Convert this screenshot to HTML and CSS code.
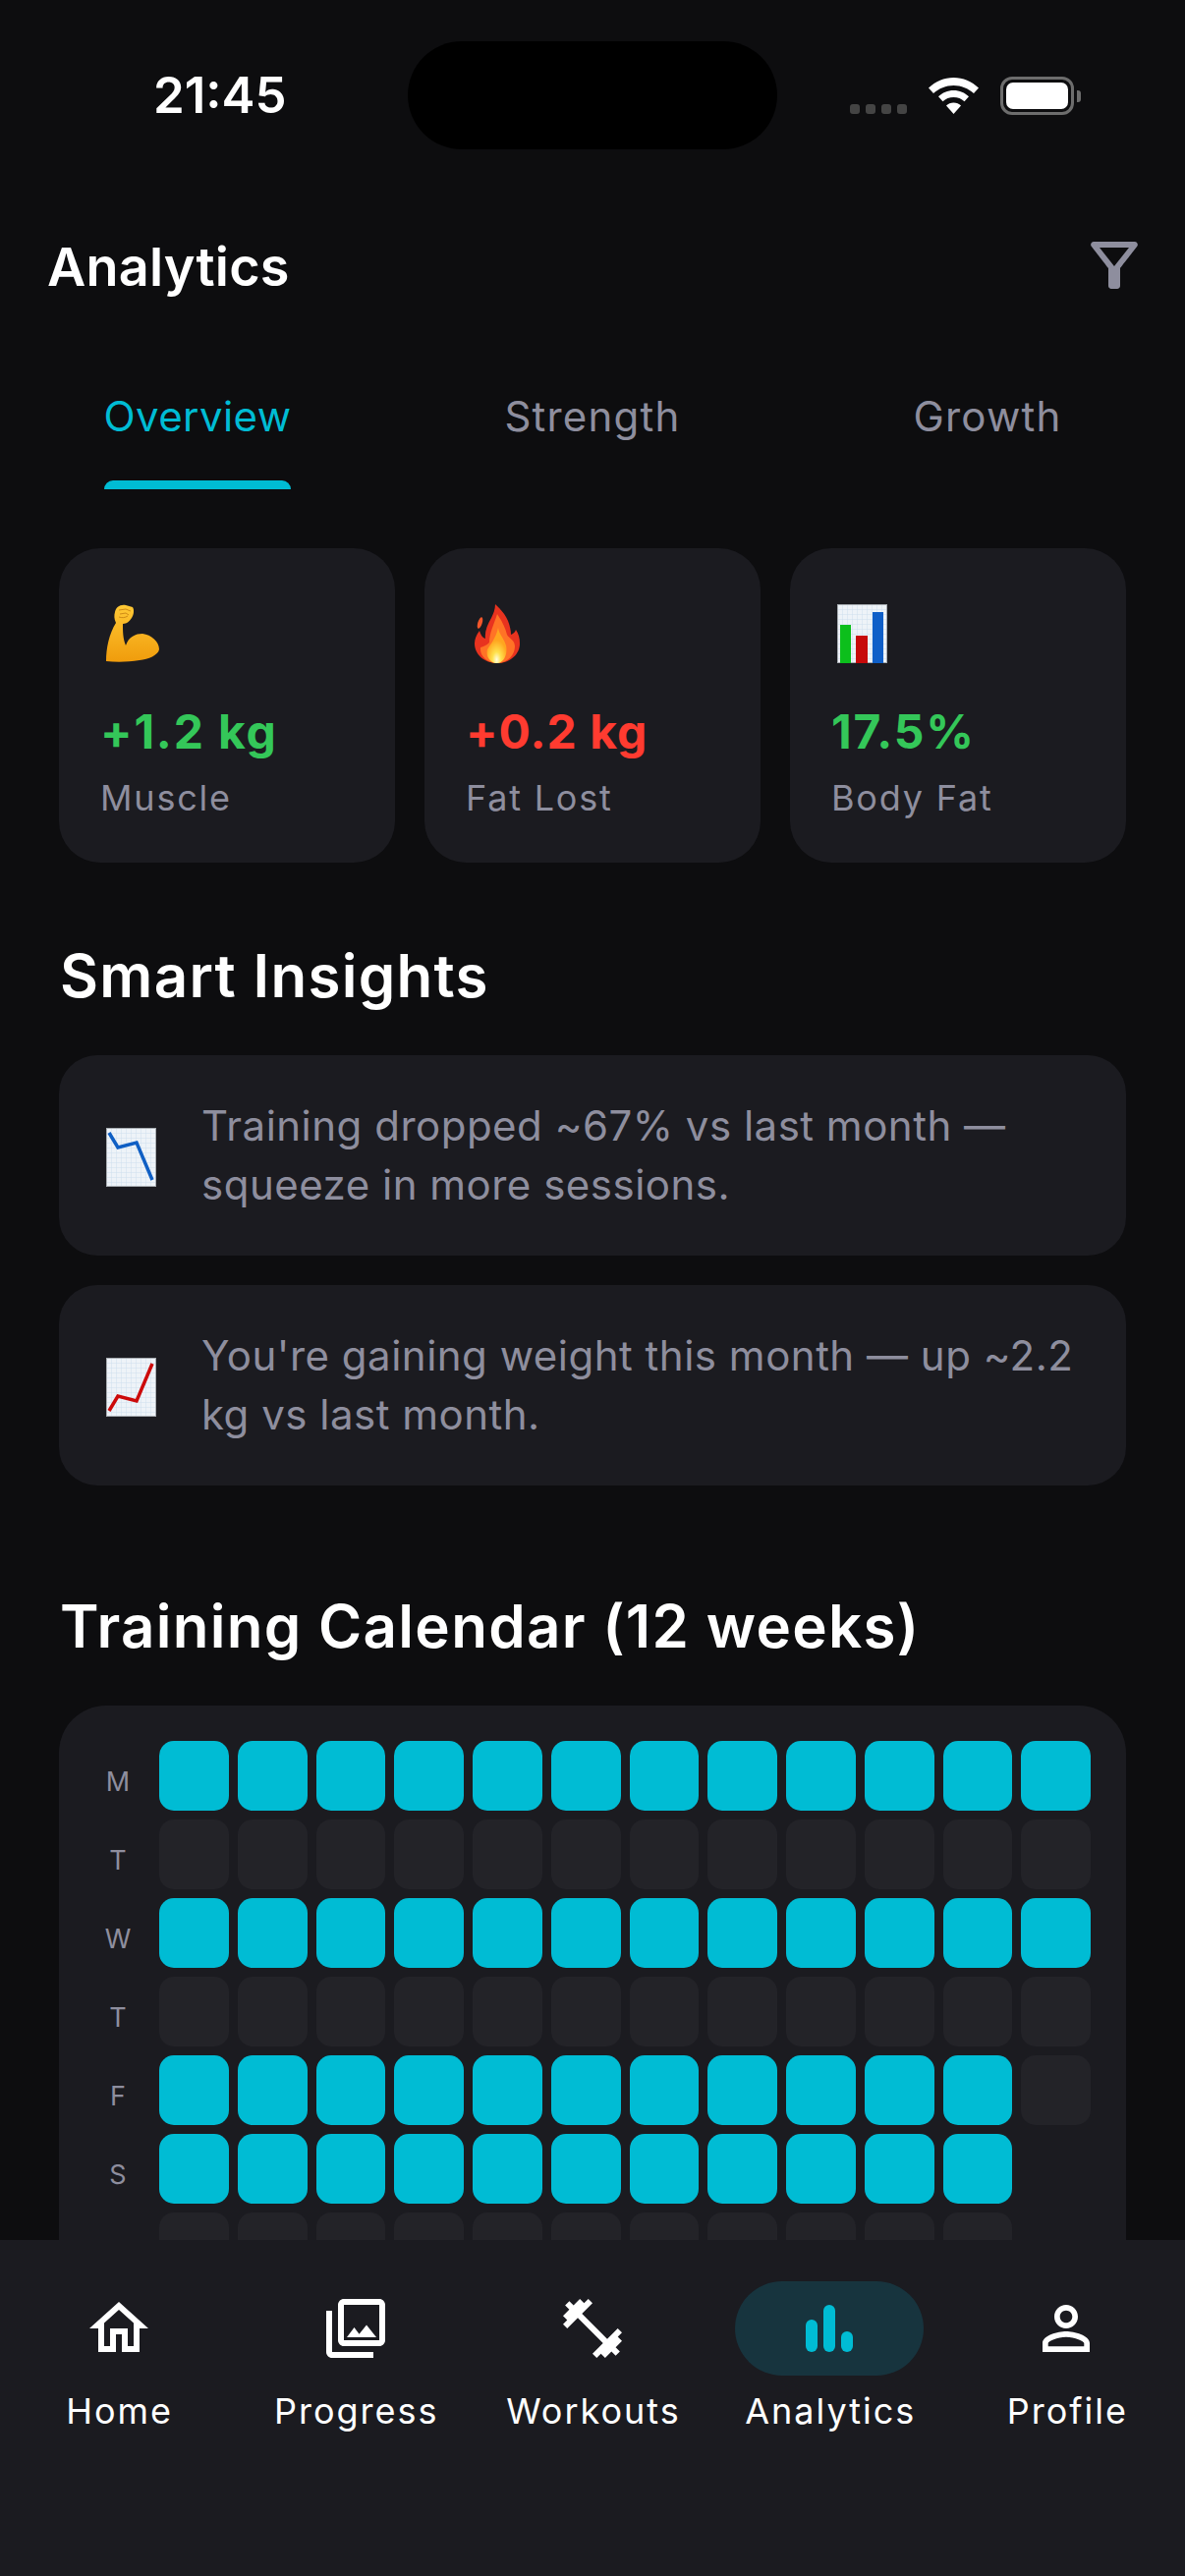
FILE: index.html
```html
<!DOCTYPE html>
<html lang="en">
<head>
<meta charset="utf-8">
<title>Analytics</title>
<link rel="stylesheet" href="styles.css">
</head>
<body>
<div class="app">
  <div class="status">
    <span class="time">21:45</span>
    <div class="island"></div>
    <div class="status-icons">
      <div class="dots"><i></i><i></i><i></i><i></i></div>
      <svg class="wifi" viewBox="0 0 51 37"><path fill="#fff" d="M25.5 0C35 0 44 4 51 10.5L46 16C40.5 11 33.300 8 25.500 8S10.500 11 5 16L0 10.500C7 4 16 0 25.500 0Z"/><path fill="#fff" d="M25.500 13C31.500 13 37 15.300 41 19.300L36.500 24.300C33.500 21.500 29.800 20 25.500 20S17.500 21.500 14.500 24.300L10 19.300C14 15.300 19.500 13 25.500 13Z"/><path fill="#fff" d="M25.500 25.500C28.500 25.500 31 26.500 33 28.500L25.500 37 18 28.500C20 26.500 22.500 25.500 25.500 25.500Z"/></svg>
      <div class="battery"><div class="battery-fill"></div></div>
      <div class="battery-tip"></div>
    </div>
  </div>

  <header class="header">
    <h1 class="title">Analytics</h1>
    <svg class="filter" viewBox="0 0 24 24"><path fill="#8e8e9e" d="M7 6h10l-5.010 6.300L7 6zm-2.750-.39C6.270 8.200 10 13 10 13v6c0 .55.45 1 1 1h2c.55 0 1-.45 1-1v-6s3.720-4.800 5.740-7.390c.51-.66.04-1.610-.79-1.610H5.040c-.83 0-1.300.95-.79 1.610z"/></svg>
  </header>

  <nav class="tabs">
    <div class="tab tab-active">Overview<span class="tab-bar"></span></div>
    <div class="tab">Strength</div>
    <div class="tab">Growth</div>
  </nav>

  <section class="stats">
    <div class="stat">
      <svg class="emoji" viewBox="0 0 54 60"><defs><linearGradient id="arm" x1="0" y1="0" x2="0" y2="1"><stop offset="0" stop-color="#ffc935"/><stop offset="1" stop-color="#f09c0c"/></linearGradient></defs><path fill="url(#arm)" d="M9 8C10 3 14 0 20 1L27 3C29 6 28 11 26 14 24 17 21 20 17 20 17 27 17 35 20 42 23 33 30 30 37 30 46 31 54 38 54 46 53 52 43 56 34 57 22 59 10 59 0 58 0 45 3 30 10 19 8 15 8 11 9 8Z"/><path fill="none" stroke="#b9720c" stroke-width="1" opacity=".7" d="M13 6l7-1 5 2M14 10l6-1 3 2M13 13c3 1 6 1 9-1"/></svg>
      <div class="stat-value val-green">+1.2 kg</div>
      <div class="stat-label">Muscle</div>
    </div>
    <div class="stat">
      <svg class="emoji" viewBox="0 0 54 60"><defs><radialGradient id="core" cx=".5" cy=".9" r=".55"><stop offset="0" stop-color="#fffde0"/><stop offset=".4" stop-color="#ffe14d"/><stop offset="1" stop-color="#ffa51f"/></radialGradient></defs><g transform="translate(3 0)"><ellipse cx="5.500" cy="19" rx="2.200" ry="6" transform="rotate(18 5.500 19)" fill="#f4562a"/><path fill="#e8331f" d="M21 0C25 4 31 9 34 17 36 22 37 27 37 31 39 30 41 29 42 26 45 30 46 35 46 40 46 51 36 60 23 60 10 60 0 51 0 40 0 35 2 31 5 27 6 31 8 34 11 35 10 28 13 21 17 14 19 10 21 5 21 0Z"/><path fill="#ff7326" d="M23 10C27 16 31 23 33 31 35 35 41 36 41 43 41 52 33 60 23 60 12 60 5 52 6 44 9 43 12 42 15 39 15 29 20 20 23 10Z"/><path fill="url(#core)" d="M24 24C25 31 30 35 32 42 34 52 29 60 23 60 16 60 11 53 13 46 16 41 22 34 24 24Z"/></g></svg>
      <div class="stat-value val-red">+0.2 kg</div>
      <div class="stat-label">Fat Lost</div>
    </div>
    <div class="stat">
      <svg class="emoji" viewBox="0 0 54 60"><defs><pattern id="g0" width="5" height="5" patternUnits="userSpaceOnUse"><rect width="5" height="5" fill="#eef3f8"/><path d="M0 0H5M0 0V5" stroke="#cfe0ee" stroke-width="1"/></pattern></defs><rect x="0.500" y="0.500" width="50" height="59" fill="url(#g0)" stroke="#a8adb2"/><rect x="3" y="21" width="11" height="39" fill="#0cbf1c"/><rect x="19" y="32" width="12" height="28" fill="#c70a0a"/><rect x="36" y="8" width="11" height="52" fill="#0f5fc8"/></svg>
      <div class="stat-value val-green">17.5%</div>
      <div class="stat-label">Body Fat</div>
    </div>
  </section>

  <h2 class="section-title insights-title">Smart Insights</h2>
  <section class="insights">
    <div class="insight">
      <svg class="emoji-chart" viewBox="0 0 51 60"><defs><pattern id="g1" width="5" height="5" patternUnits="userSpaceOnUse"><rect width="5" height="5" fill="#eef3f8"/><path d="M0 0H5M0 0V5" stroke="#cfe0ee" stroke-width="1"/></pattern></defs><rect x="0.500" y="0.500" width="50" height="59" fill="url(#g1)" stroke="#a8adb2"/><path fill="none" stroke="#0f5fc4" stroke-width="3.500" d="M3 5l9 15 19-5 16 38"/></svg>
      <p class="insight-text">Training dropped ~67% vs last month — squeeze in more sessions.</p>
    </div>
    <div class="insight">
      <svg class="emoji-chart" viewBox="0 0 51 60"><rect x="0.500" y="0.500" width="50" height="59" fill="url(#g1)" stroke="#a8adb2"/><path fill="none" stroke="#cc0a0a" stroke-width="3.500" d="M3 54l9-15 19 5L47 6"/></svg>
      <p class="insight-text">You're gaining weight this month — up ~2.2 kg vs last month.</p>
    </div>
  </section>

  <h2 class="section-title calendar-title">Training Calendar (12 weeks)</h2>
  <section class="calendar">
    <div class="cal-row"><span class="day">M</span><div class="cells"><i class="on"></i><i class="on"></i><i class="on"></i><i class="on"></i><i class="on"></i><i class="on"></i><i class="on"></i><i class="on"></i><i class="on"></i><i class="on"></i><i class="on"></i><i class="on"></i></div></div>
    <div class="cal-row"><span class="day">T</span><div class="cells"><i></i><i></i><i></i><i></i><i></i><i></i><i></i><i></i><i></i><i></i><i></i><i></i></div></div>
    <div class="cal-row"><span class="day">W</span><div class="cells"><i class="on"></i><i class="on"></i><i class="on"></i><i class="on"></i><i class="on"></i><i class="on"></i><i class="on"></i><i class="on"></i><i class="on"></i><i class="on"></i><i class="on"></i><i class="on"></i></div></div>
    <div class="cal-row"><span class="day">T</span><div class="cells"><i></i><i></i><i></i><i></i><i></i><i></i><i></i><i></i><i></i><i></i><i></i><i></i></div></div>
    <div class="cal-row"><span class="day">F</span><div class="cells"><i class="on"></i><i class="on"></i><i class="on"></i><i class="on"></i><i class="on"></i><i class="on"></i><i class="on"></i><i class="on"></i><i class="on"></i><i class="on"></i><i class="on"></i><i></i></div></div>
    <div class="cal-row"><span class="day">S</span><div class="cells"><i class="on"></i><i class="on"></i><i class="on"></i><i class="on"></i><i class="on"></i><i class="on"></i><i class="on"></i><i class="on"></i><i class="on"></i><i class="on"></i><i class="on"></i></div></div>
    <div class="cal-row"><span class="day">S</span><div class="cells"><i></i><i></i><i></i><i></i><i></i><i></i><i></i><i></i><i></i><i></i><i></i></div></div>
  </section>

  <footer class="nav">
    <div class="nav-item">
      <div class="nav-icon"><svg viewBox="0 0 24 24"><path fill="#fff" d="M12 5.690l5 4.500V18h-2v-6H9v6H7v-7.810l5-4.500M12 3L2 12h3v8h6v-6h2v6h6v-8h3L12 3z"/></svg></div>
      <span class="nav-label">Home</span>
    </div>
    <div class="nav-item">
      <div class="nav-icon"><svg viewBox="0 0 24 24"><path fill="#fff" d="M20 4v12H8V4h12m0-2H8c-1.100 0-2 .9-2 2v12c0 1.100.9 2 2 2h12c1.100 0 2-.9 2-2V4c0-1.100-.9-2-2-2zm-8.500 9.670l1.690 2.260 2.480-3.100L19 15H9zM2 6v14c0 1.100.9 2 2 2h14v-2H4V6H2z"/></svg></div>
      <span class="nav-label">Progress</span>
    </div>
    <div class="nav-item">
      <div class="nav-icon"><svg viewBox="0 0 24 24"><path fill="#fff" d="M20.570 14.860L22 13.430 20.570 12 17 15.570 8.430 7 12 3.430 10.570 2 9.140 3.430 7.710 2 5.570 4.140 4.140 2.710 2.710 4.140l1.430 1.430L2 7.710l1.430 1.430L2 10.570 3.430 12 7 8.430 15.570 17 12 20.570 13.430 22l1.430-1.430L16.290 22l2.140-2.140 1.430 1.430 1.430-1.430-1.430-1.430L22 16.290z"/></svg></div>
      <span class="nav-label">Workouts</span>
    </div>
    <div class="nav-item">
      <div class="nav-icon nav-icon-active"><svg viewBox="0 0 24 24"><rect fill="#00bcd4" x="4" y="9" width="4" height="11" rx="2"/><rect fill="#00bcd4" x="10" y="4" width="4" height="16" rx="2"/><rect fill="#00bcd4" x="16" y="13" width="4" height="7" rx="2"/></svg></div>
      <span class="nav-label">Analytics</span>
    </div>
    <div class="nav-item">
      <div class="nav-icon"><svg viewBox="0 0 24 24"><path fill="#fff" d="M12 5.900c1.160 0 2.100.94 2.100 2.100s-.94 2.100-2.100 2.100S9.900 9.160 9.900 8s.94-2.100 2.100-2.100m0 9c2.970 0 6.100 1.460 6.100 2.100v1.100H5.900V17c0-.64 3.130-2.100 6.100-2.100M12 4C9.790 4 8 5.790 8 8s1.790 4 4 4 4-1.790 4-4-1.790-4-4-4zm0 9c-2.670 0-8 1.340-8 4v3h16v-3c0-2.660-5.330-4-8-4z"/></svg></div>
      <span class="nav-label">Profile</span>
    </div>
  </footer>
</div>
</body>
</html>
```

FILE: styles.css
```css
* { box-sizing: border-box; }
html, body { margin: 0; padding: 0; background: #0d0d0f; }
body { font-family: Inter, "Liberation Sans", sans-serif; color: #fff; }
.app { width: 1206px; height: 2622px; position: relative; overflow: hidden; background: #0d0d0f; }

.status { height: 194px; position: relative; }
.time { position: absolute; left: 156px; top: 69px; font-size: 51px; line-height: 56px; font-weight: 600; }
.island { position: absolute; left: 415px; top: 42px; width: 376px; height: 110px; border-radius: 55px; background: #000; }
.status-icons { position: absolute; left: 865px; top: 78px; width: 240px; height: 40px; display: flex; align-items: flex-start; }
.dots { display: flex; gap: 6px; margin-top: 28px; }
.dots i { width: 10px; height: 10px; border-radius: 3px; background: #444; }
.wifi { width: 51px; height: 37px; margin-left: 22px; margin-top: 1px; }
.battery { width: 75px; height: 39px; margin-left: 22px; border: 3px solid #6d6d6d; border-radius: 12px; padding: 3px; }
.battery-fill { width: 100%; height: 100%; background: #fff; border-radius: 7px; }
.battery-tip { width: 4px; height: 12px; margin-top: 14px; margin-left: 3px; background: #6d6d6d; border-radius: 0 3px 3px 0; }

.header { height: 156px; padding: 0 48px; display: flex; justify-content: space-between; align-items: flex-start; position: relative; }
.title { margin: 46px 0 0; font-size: 54px; line-height: 64px; font-weight: 600; letter-spacing: 0.2px; }
.filter { width: 72px; height: 72px; position: absolute; right: 36px; top: 40px; }

.tabs { height: 148px; display: grid; grid-template-columns: repeat(3, 1fr); }
.tab { position: relative; text-align: center; font-size: 42px; line-height: 60px; font-weight: 400; letter-spacing: 1.200px; color: #8e8e9e; padding-top: 44px; height: 148px; justify-self: center; }
.tab-active { color: #00bcd4; letter-spacing: 0.400px; }
.tab-bar { position: absolute; left: 0; right: 0; bottom: 0; height: 9px; background: #00bcd4; border-radius: 9px 9px 0 0; }

.stats { margin-top: 60px; padding: 0 60px; display: grid; grid-template-columns: repeat(3, 342px); gap: 30px; }
.stat { height: 320px; background: #1b1b20; border-radius: 42px; padding: 57px 42px 0; }
.emoji { display: block; width: 54px; height: 60px; margin-left: 6px; }
.stat-value { margin-top: 40px; font-size: 48px; line-height: 60px; font-weight: 700; letter-spacing: 1px; }
.val-green { color: #34c759; letter-spacing: 1.800px; }
.val-red { color: #ff3b30; }
.stat-label { margin-top: 13px; font-size: 36px; line-height: 48px; font-weight: 400; letter-spacing: 1.800px; color: #8e8e9e; }

.section-title { margin: 0; padding-left: 61px; font-size: 60px; line-height: 72px; font-weight: 600; letter-spacing: 1.300px; }
.insights-title { margin-top: 79px; }
.insights { margin-top: 45px; padding: 0 60px; display: flex; flex-direction: column; gap: 30px; }
.insight { height: 204px; background: #1b1b20; border-radius: 39px; display: flex; align-items: center; padding: 0 40px 0 48px; }
.emoji-chart { width: 51px; height: 60px; flex: none; margin-top: 4px; }
.insight-text { margin: 0 0 0 46px; font-size: 42px; line-height: 60px; font-weight: 400; letter-spacing: 0.500px; color: #8e8e9e; }

.calendar-title { margin-top: 107px; }
.calendar { margin: 45px 60px 0; height: 600px; background: #1b1b20; border-radius: 48px; padding: 36px 36px 0 0; display: flex; flex-direction: column; gap: 9px; }
.cal-row { display: flex; align-items: flex-start; }
.day { width: 102px; height: 71px; padding: 6px 0 0 18px; text-align: center; font-size: 27px; line-height: 71px; color: #8e8e9e; }
.cells { display: grid; grid-template-columns: repeat(12, 70.75px); gap: 9px; }
.cells i { display: block; height: 70.75px; border-radius: 15px; background: #232328; }
.cells i.on { background: #00bcd4; }

.nav { position: absolute; left: 0; right: 0; top: 2280px; bottom: 0; background: #1b1b20; display: grid; grid-template-columns: repeat(5, 1fr); padding-top: 42px; align-items: start; }
.nav-item { display: flex; flex-direction: column; align-items: center; }
.nav-icon { width: 192px; height: 96px; border-radius: 48px; display: flex; align-items: center; justify-content: center; }
.nav-icon svg { width: 72px; height: 72px; display: block; }
.nav-icon-active { background: #17343e; }
.nav-label { margin-top: 12px; padding-left: 2px; font-size: 36px; line-height: 48px; font-weight: 400; letter-spacing: 2px; color: #fff; white-space: nowrap; }
```
